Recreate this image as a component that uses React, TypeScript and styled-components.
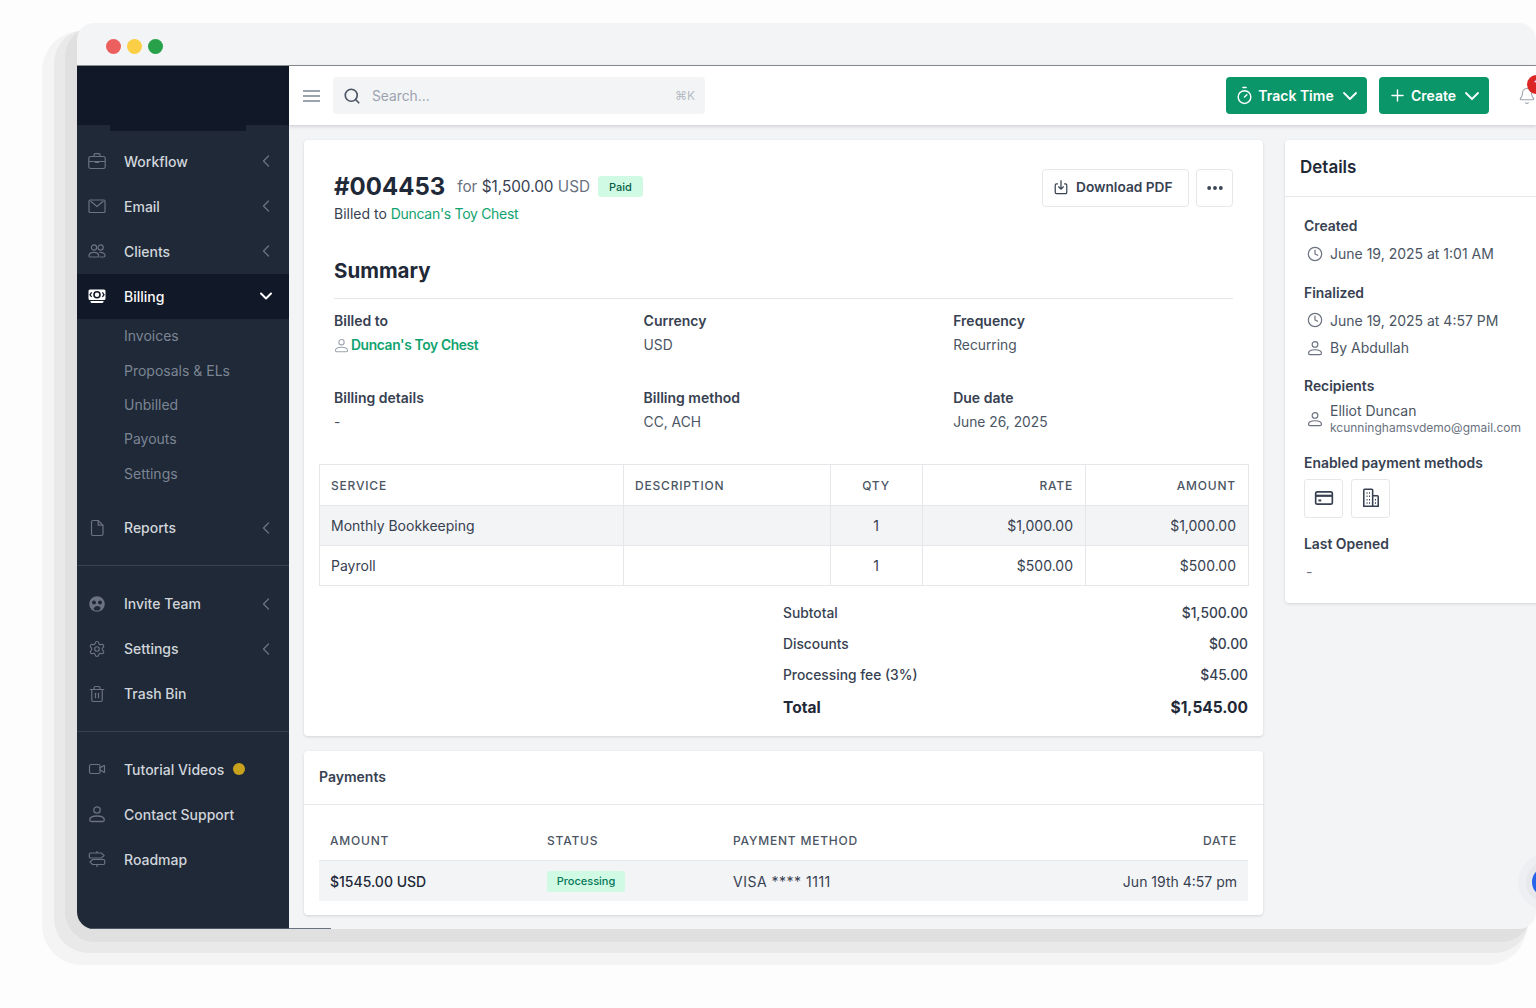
import React from 'react';
import styled, { createGlobalStyle } from 'styled-components';
import { ChevronDown, ChevronLeft, Clock, Ellipsis, Plus, Search, Settings, Timer, Trash2, Video, Bell } from 'lucide-react';

const GlobalStyle = createGlobalStyle`
  html, body {
    margin: 0;
    height: 100%;
    overflow: hidden;
    background: #fdfdfd;
    font-family: Inter, "Noto Sans", "Liberation Sans", sans-serif;
    color: #1f2937;
  }
  * { box-sizing: border-box; }
`;

const Page = styled.div`
  width: 1536px;
  height: 1008px;
  padding: 23px 0 0 77px;
  overflow: hidden;
`;

const Window = styled.div`
  position: relative;
  z-index: 0;
  width: 1459px;
  height: 906px;
  border-radius: 17px;
  display: flex;
  flex-direction: column;

  /* stepped drop shadow behind the window */
  &::before {
    content: '';
    position: absolute;
    z-index: -1;
    left: -12px;
    right: 5px;
    top: 4px;
    bottom: -13px;
    border-radius: 30px;
    background: #e0e0e0;
    box-shadow: -6.5px 6.5px 0 4.5px #e9e9e9, -13.5px 13.5px 0 9.5px #f4f4f4;
  }
`;

const WindowClip = styled.div`
  flex: 1;
  min-height: 0;
  border-radius: 17px;
  overflow: hidden;
  display: flex;
  flex-direction: column;
`;

const TitleBar = styled.div`
  flex: none;
  height: 43px;
  padding: 4px 0 0 29px;
  background: #f3f4f6;
  border-bottom: 1px solid #8b8d91;
  display: flex;
  align-items: center;
  gap: 6px;
`;

const Dot = styled.span<{ $color: string }>`
  width: 15px;
  height: 15px;
  border-radius: 50%;
  background: ${p => p.$color};
`;

const Body = styled.div`
  flex: 1;
  min-height: 0;
  display: flex;
`;

const Sidebar = styled.aside`
  flex: none;
  width: 212px;
  background: #1f2937;
  border-bottom: 1px solid #4b5563;
  color: #d1d5db;
`;

const LogoArea = styled.div`
  position: relative;
  height: 59px;
  background: #111827;

  &::after {
    content: '';
    position: absolute;
    left: 33px;
    top: 59px;
    width: 136px;
    height: 6px;
    background: #111827;
  }
`;

const Nav = styled.nav`
  padding-top: 13.5px;
`;

const NavRow = styled.div<{ $active?: boolean }>`
  height: 45px;
  padding: 0 13px 0 11px;
  display: flex;
  align-items: center;
  font-size: 14px;
  font-weight: 500;
  color: ${p => (p.$active ? '#f9fafb' : '#d1d5db')};
  background: ${p => (p.$active ? '#111827' : 'transparent')};

  > svg:first-child {
    flex: none;
    width: 18px;
    height: 18px;
    color: ${p => (p.$active ? '#ffffff' : '#6b7280')};
  }
`;

const NavLabel = styled.span`
  margin-left: 18px;
  flex: 1;
  display: flex;
  align-items: center;
  gap: 9px;
`;

const NewDot = styled.span`
  width: 12px;
  height: 12px;
  border-radius: 50%;
  background: #c9a21d;
`;

const SubNav = styled.div`
  padding-bottom: 15px;
`;

const SubRow = styled.div`
  height: 34.4px;
  padding-left: 47px;
  display: flex;
  align-items: center;
  font-size: 14px;
  color: #7c8594;
`;

const NavDivider = styled.div<{ $tight?: boolean }>`
  height: 1px;
  margin: 15px 0 ${p => (p.$tight ? '14.5px' : '15px')};
  background: #374151;
`;

const Main = styled.div`
  position: relative;
  flex: 1;
  min-width: 0;
  display: flex;
  flex-direction: column;
  background: #f3f4f6;
`;

const TopBar = styled.header`
  position: relative;
  flex: none;
  height: 59px;
  background: #ffffff;
  padding-left: 14px;
  display: flex;
  align-items: center;
  box-shadow: 0 1px 4px rgba(17, 24, 39, 0.2);
`;

const Burger = styled.span`
  width: 17px;
  height: 12px;
  margin-right: 13px;
  border-top: 2px solid #9ca3af;
  border-bottom: 2px solid #9ca3af;
  position: relative;

  &::after {
    content: '';
    position: absolute;
    left: 0;
    right: 0;
    top: 3px;
    height: 2px;
    background: #9ca3af;
  }
`;

const SearchBox = styled.div`
  width: 372px;
  height: 37px;
  padding: 0 10px;
  border-radius: 4px;
  background: #f3f4f6;
  display: flex;
  align-items: center;
  gap: 11px;
  font-size: 13.8px;
  color: #9ca3af;

  svg {
    width: 18px;
    height: 18px;
    color: #4b5563;
  }
`;

const SearchText = styled.span`
  flex: 1;
`;

const Kbd = styled.span`
  font-size: 12px;
  color: #b6bbc4;
`;

const TopActions = styled.div`
  margin-left: auto;
  display: flex;
  align-items: center;
  gap: 12px;
`;

const GreenButton = styled.button<{ $width: number }>`
  width: ${p => p.$width}px;
  height: 37px;
  padding: 0 0 0 2px;
  border: 0;
  border-radius: 4px;
  background: #0b9669;
  color: #ffffff;
  font: 600 14px Inter, sans-serif;
  display: flex;
  align-items: center;
  justify-content: center;
  gap: 4px;

  svg {
    width: 19px;
    height: 19px;
  }

  svg:last-child {
    width: 24px;
    height: 24px;
    margin-right: -2px;
  }
`;

const BellWrap = styled.span`
  position: relative;
  width: 18px;
  height: 20px;
  margin-left: 17px;
  color: #9ca3af;

  svg {
    width: 18px;
    height: 20px;
  }
`;

const Badge = styled.span`
  position: absolute;
  left: 9px;
  top: -11px;
  width: 19px;
  height: 19px;
  border-radius: 50%;
  background: #dc2626;
  color: #ffffff;
  font-size: 11px;
  font-weight: 700;
  text-align: center;
  line-height: 19px;
`;

const Content = styled.div`
  flex: 1;
  min-height: 0;
  padding: 15px 0 0 15px;
  display: flex;
  gap: 22px;
`;

const LeftColumn = styled.div`
  flex: none;
  width: 959px;
  display: flex;
  flex-direction: column;
  gap: 15px;
`;

const Card = styled.section`
  background: #ffffff;
  border-radius: 4px;
  box-shadow: 0 1px 3px rgba(17, 24, 39, 0.14);
`;

const InvoiceCard = styled(Card)`
  height: 596px;
  padding: 29px 15px 0;
`;

const Head = styled.div`
  padding: 0 15px;
  display: flex;
  justify-content: space-between;
`;

const TitleRow = styled.div`
  display: flex;
  align-items: center;
  height: 35px;
`;

const InvoiceNo = styled.h1`
  margin: 0 12px 0 0;
  font-size: 24px;
  font-weight: 700;
  color: #1f2937;
`;

const ForText = styled.span`
  font-size: 15.3px;
  color: #6b7280;

  b {
    font-weight: 400;
    color: #374151;
  }
`;

const StatusBadge = styled.span<{ $width: number }>`
  width: ${p => p.$width}px;
  height: 21px;
  border-radius: 3px;
  background: #d1fae5;
  color: #047857;
  font-size: 11px;
  font-weight: 500;
  display: inline-flex;
  align-items: center;
  justify-content: center;
`;

const PaidBadge = styled(StatusBadge)`
  margin-left: 8px;
  color: #065f46;
`;

const BilledLine = styled.div`
  margin-top: 1px;
  font-size: 14px;
  color: #374151;
`;

const GreenLink = styled.a`
  color: #10a36f;
  letter-spacing: -0.3px;
`;

const HeadButtons = styled.div`
  display: flex;
  gap: 7px;
`;

const OutlineButton = styled.button<{ $width: number }>`
  width: ${p => p.$width}px;
  height: 38px;
  padding: 0 0 2px 10px;
  border: 1px solid #e5e7eb;
  border-radius: 4px;
  background: #ffffff;
  color: #374151;
  font: 600 13.7px Inter, sans-serif;
  display: flex;
  align-items: center;
  gap: 7px;

  svg {
    width: 16px;
    height: 16px;
  }
`;

const MoreButton = styled(OutlineButton)`
  padding: 0;
  justify-content: center;

  svg {
    width: 20px;
    height: 20px;
    stroke-width: 2.6;
  }
`;

const SummaryTitle = styled.h2`
  margin: 35px 15px 0;
  padding-bottom: 14px;
  border-bottom: 1px solid #e5e7eb;
  font-size: 20.5px;
  line-height: 27px;
  font-weight: 700;
  color: #1f2937;
`;

const SummaryGrid = styled.div`
  margin: 12px 15px 0;
  display: grid;
  grid-template-columns: repeat(3, 309.6px);
  row-gap: 33px;
`;

const FieldLabel = styled.div`
  font-size: 14px;
  line-height: 20px;
  font-weight: 600;
  color: #374151;
`;

const FieldValue = styled.div`
  margin-top: 4px;
  font-size: 13.8px;
  line-height: 20px;
  color: #4b5563;
  display: flex;
  align-items: center;
  gap: 2px;

  svg {
    width: 15px;
    height: 15px;
    color: #9ca3af;
  }
`;

const StrongLink = styled(GreenLink)`
  font-weight: 600;
  letter-spacing: -0.35px;
`;

const ServiceTable = styled.table`
  width: 929px;
  margin-top: 32px;
  border-collapse: collapse;
  table-layout: fixed;
  font-size: 14px;
`;

const Th = styled.th<{ $align?: string; $width: number }>`
  width: ${p => p.$width}px;
  height: 41px;
  padding: 0 12px 0 11px;
  border: 1px solid #e5e7eb;
  font-size: 12px;
  font-weight: 500;
  letter-spacing: 0.8px;
  color: #4b5563;
  text-align: ${p => p.$align || 'left'};
`;

const Td = styled.td<{ $align?: string }>`
  height: 40px;
  padding: 0 12px 0 11px;
  border: 1px solid #e5e7eb;
  color: #374151;
  text-align: ${p => p.$align || 'left'};
`;

const ShadedRow = styled.tr<{ $shaded?: boolean }>`
  background: ${p => (p.$shaded ? '#f3f4f6' : '#ffffff')};
`;

const Totals = styled.div`
  margin: 11px 0 0 464px;
  display: flex;
  flex-direction: column;
`;

const TotalRow = styled.div<{ $big?: boolean }>`
  height: ${p => (p.$big ? '35px' : '31px')};
  display: flex;
  align-items: center;
  justify-content: space-between;
  font-size: ${p => (p.$big ? '15.5px' : '13.8px')};
  font-weight: ${p => (p.$big ? 700 : 500)};
  color: ${p => (p.$big ? '#1f2937' : '#374151')};
`;

const PaymentsCard = styled(Card)`
  height: 164px;
`;

const PaymentsHead = styled.div`
  height: 54px;
  padding: 0 0 2px 15px;
  border-bottom: 1px solid #e5e7eb;
  display: flex;
  align-items: center;
  font-size: 14px;
  font-weight: 600;
  color: #374151;
`;

const PaymentsTable = styled.div`
  margin: 0 15px;
`;

const PayRow = styled.div<{ $shaded?: boolean }>`
  height: ${p => (p.$shaded ? '40px' : '56px')};
  padding: ${p => (p.$shaded ? '0 11px' : '15px 11px 0')};
  display: grid;
  grid-template-columns: 217px 186px 1fr auto;
  align-items: center;
  background: ${p => (p.$shaded ? '#f3f4f6' : 'transparent')};
  border-bottom: ${p => (p.$shaded ? '0' : '1px solid #e5e7eb')};
  font-size: 14px;
  color: #374151;
`;

const PayHead = styled.span`
  font-size: 12px;
  font-weight: 500;
  letter-spacing: 0.8px;
  color: #4b5563;
`;

const PayAmount = styled.span`
  font-weight: 500;
  color: #1f2937;
`;

const CardNumber = styled.span`
  letter-spacing: 0.5px;
`;

const DetailsCard = styled(Card)`
  flex: none;
  width: 260px;
  height: 463px;
  align-self: flex-start;
`;

const DetailsTitle = styled.h3`
  height: 57px;
  margin: 0;
  padding: 0 0 3px 15px;
  border-bottom: 1px solid #e5e7eb;
  display: flex;
  align-items: center;
  font-size: 17px;
  font-weight: 600;
  color: #1f2937;
`;

const DetailsBody = styled.div`
  padding: 19px 0 0 19px;
  display: flex;
  flex-direction: column;
`;

const DetailsLabel = styled.div<{ $gap?: number }>`
  margin-top: ${p => p.$gap || 0}px;
  font-size: 13.9px;
  line-height: 20px;
  font-weight: 600;
  color: #374151;
`;

const DetailsLine = styled.div`
  height: 27.5px;
  padding-left: 3px;
  display: flex;
  align-items: center;
  gap: 7px;
  font-size: 14px;
  color: #4b5563;

  svg {
    flex: none;
    width: 16px;
    height: 16px;
    color: #6b7280;
  }
`;

const FirstLine = styled(DetailsLine)`
  margin-top: 4px;
`;

const RecipientLine = styled(DetailsLine)`
  height: 34px;
  margin-top: 6px;
`;

const RecipientText = styled.div`
  line-height: 17px;
`;

const Email = styled.div`
  font-size: 12px;
  color: #6b7280;
`;

const MethodRow = styled.div`
  margin-top: 6px;
  display: flex;
  gap: 8px;
`;

const MethodButton = styled.span`
  width: 39px;
  height: 39px;
  border: 1px solid #e5e7eb;
  border-radius: 3px;
  display: flex;
  align-items: center;
  justify-content: center;
  color: #374151;

  svg {
    width: 20px;
    height: 20px;
  }
`;

const Dash = styled.div`
  margin: 9px 0 0 2px;
  font-size: 14px;
  color: #6b7280;
`;

const ChatBubble = styled.span`
  position: absolute;
  left: 1243px;
  top: 801px;
  width: 30px;
  height: 30px;
  border-radius: 50%;
  background: #2563eb;
  box-shadow: 0 0 0 6px rgba(17, 24, 39, 0.03), 0 0 0 14px rgba(17, 24, 39, 0.02);
`;

const BottomLine = styled.span`
  position: absolute;
  left: 0;
  bottom: 0;
  width: 42px;
  height: 1px;
  background: #6b7280;
`;

const BriefcaseIcon = () => (
  <svg viewBox="0 0 18 18" fill="none" stroke="currentColor" strokeWidth="1.2">
    <rect x="0.8" y="4.5" width="16.4" height="12" rx="1.8" />
    <path d="M0.8 9.5h16.4M6 4.5V3a1.4 1.4 0 0 1 1.4-1.4h3.2A1.4 1.4 0 0 1 12 3v1.5M7.5 9.5v1h3v-1" />
  </svg>
);

const MailIcon = () => (
  <svg viewBox="0 0 18 18" fill="none" stroke="currentColor" strokeWidth="1.2">
    <rect x="1" y="3" width="16" height="12.5" rx="1" />
    <path d="M2.5 4l6.5 5.5L15.5 4" />
  </svg>
);

const UsersIcon = () => (
  <svg viewBox="0 0 18 18" fill="none" stroke="currentColor" strokeWidth="1.2">
    <circle cx="6" cy="5.5" r="2.6" />
    <circle cx="12.6" cy="5.5" r="2.6" />
    <path d="M1 14c0-2.2 2-3.6 4.8-3.6s4.9 1.4 4.9 3.6c0 .7-.5 1-1 1H2c-.6 0-1-.4-1-1z" />
    <path d="M11.5 10.4c3-.3 5.5 1 5.5 3.4 0 .8-.5 1.2-1.2 1.2h-4.2" />
  </svg>
);

const BanknoteIcon = () => (
  <svg viewBox="0 0 18 18">
    <path fill="#fff" d="M2 2.5h14A1.5 1.5 0 0 1 17.5 4v7.5A1.5 1.5 0 0 1 16 13H2A1.5 1.5 0 0 1 .5 11.5V4A1.5 1.5 0 0 1 2 2.5z" />
    <path fill="#fff" d="M2.5 14h13v.5a1.6 1.6 0 0 1-1.6 1.6H4.1a1.6 1.6 0 0 1-1.6-1.6z" />
    <circle cx="9" cy="7.7" r="3" fill="#fff" stroke="#111827" strokeWidth="1.6" />
    <path fill="none" stroke="#111827" strokeWidth="1.3" d="M3.6 5.4L2 7.7l1.6 2.3M14.4 5.4L16 7.7l-1.6 2.3" />
  </svg>
);

const DocIcon = () => (
  <svg viewBox="0 0 18 18" fill="none" stroke="currentColor" strokeWidth="1.2">
    <path d="M3.5 3a1.5 1.5 0 0 1 1.5-1.5h5.2L15 6.2V15a1.5 1.5 0 0 1-1.5 1.5H5A1.5 1.5 0 0 1 3.5 15z" />
    <path d="M10.2 1.5v4.7H15" />
  </svg>
);

const FaceIcon = () => (
  <svg viewBox="0 0 18 18">
    <circle cx="9" cy="9" r="7.8" fill="currentColor" />
    <circle cx="6" cy="7.6" r="2" fill="#1f2937" />
    <circle cx="12" cy="7.6" r="2" fill="#1f2937" />
    <path d="M5.5 14c.8-2 2-3 3.8-3s2.8.8 3.4 2.2L11 15.5H7z" fill="#1f2937" />
  </svg>
);

const SignIcon = () => (
  <svg viewBox="0 0 18 18" fill="none" stroke="currentColor" strokeWidth="1.2">
    <path d="M9 1v2M9 15v2M2.5 3h11L16 5.5 13.5 8h-11A1.2 1.2 0 0 1 1.3 6.8V4.2A1.2 1.2 0 0 1 2.5 3z" />
    <path d="M15.5 9.5h-11L2 12l2.5 2.5h11a1.2 1.2 0 0 0 1.2-1.2v-2.6a1.2 1.2 0 0 0-1.2-1.2z" />
  </svg>
);

const PersonIcon = () => (
  <svg viewBox="0 0 18 18" fill="none" stroke="currentColor" strokeWidth="1.3">
    <circle cx="9" cy="5" r="3.2" />
    <path d="M1.7 15c0-2.5 3-4 7.3-4s7.3 1.5 7.3 4c0 1-.8 1.5-1.6 1.5H3.3c-.8 0-1.6-.5-1.6-1.5z" />
  </svg>
);

const DownloadIcon = () => (
  <svg viewBox="0 0 18 18" fill="none" stroke="currentColor" strokeWidth="1.4">
    <path d="M5.5 5.5H4A1.5 1.5 0 0 0 2.5 7v8A1.5 1.5 0 0 0 4 16.5h10a1.5 1.5 0 0 0 1.5-1.5V7A1.5 1.5 0 0 0 14 5.5h-1.5" />
    <path d="M9 1.5V11M6 8.5l3 3 3-3" />
  </svg>
);

const CardIcon = () => (
  <svg viewBox="0 0 18 18" fill="none" stroke="currentColor" strokeWidth="1.5">
    <rect x="1.5" y="3.5" width="15" height="11" rx="1.5" />
    <path d="M1.5 7h15" strokeWidth="2" />
    <path d="M4 11.2h2.5" strokeWidth="1.8" />
  </svg>
);

const BuildingIcon = () => (
  <svg viewBox="0 0 18 18" fill="none" stroke="currentColor" strokeWidth="1.4">
    <path d="M2.5 16.5V2a.8.8 0 0 1 .8-.8h6.4a.8.8 0 0 1 .8.8v14.5zM10.500 7h4.200a.8.8 0 0 1 .8.8v8.700h-5z" />
    <path d="M5 4.500h.9M7.200 4.500h.9M5 7.500h.9M7.200 7.500h.9M5 10.500h.9M7.200 10.500h.9M5 13.500h.9M7.200 13.500h.9M12.500 10.500h1M12.500 13.500h1" />
  </svg>
);

type NavEntry = { label: string; icon: React.ReactNode; chevron?: boolean; dot?: boolean };

const renderRow = (item: NavEntry) => (
  <NavRow key={item.label}>
    {item.icon}
    <NavLabel>
      {item.label}
      {item.dot && <NewDot />}
    </NavLabel>
    {item.chevron && <ChevronLeft size={20} strokeWidth={1.6} color="#6b7280" />}
  </NavRow>
);

const workNav: NavEntry[] = [
  { label: 'Workflow', icon: <BriefcaseIcon />, chevron: true },
  { label: 'Email', icon: <MailIcon />, chevron: true },
  { label: 'Clients', icon: <UsersIcon />, chevron: true },
];

const teamNav: NavEntry[] = [
  { label: 'Invite Team', icon: <FaceIcon />, chevron: true },
  { label: 'Settings', icon: <Settings strokeWidth={1.6} />, chevron: true },
  { label: 'Trash Bin', icon: <Trash2 strokeWidth={1.6} /> },
];

const helpNav: NavEntry[] = [
  { label: 'Tutorial Videos', icon: <Video strokeWidth={1.6} />, dot: true },
  { label: 'Contact Support', icon: <PersonIcon /> },
  { label: 'Roadmap', icon: <SignIcon /> },
];

const billingItems = ['Invoices', 'Proposals & ELs', 'Unbilled', 'Payouts', 'Settings'];

const summary = [
  { label: 'Currency', value: 'USD' },
  { label: 'Frequency', value: 'Recurring' },
  { label: 'Billing details', value: '-' },
  { label: 'Billing method', value: 'CC, ACH' },
  { label: 'Due date', value: 'June 26, 2025' },
];

const services = [
  { name: 'Monthly Bookkeeping', qty: 1, rate: '$1,000.00', amount: '$1,000.00' },
  { name: 'Payroll', qty: 1, rate: '$500.00', amount: '$500.00' },
];

const totals = [
  { label: 'Subtotal', value: '$1,500.00' },
  { label: 'Discounts', value: '$0.00' },
  { label: 'Processing fee (3%)', value: '$45.00' },
];

export default function App() {
  return (
    <Page>
      <GlobalStyle />
      <Window>
        <WindowClip>
          <TitleBar>
            <Dot $color="#ec5f5f" />
            <Dot $color="#fbcf45" />
            <Dot $color="#27a24a" />
          </TitleBar>
          <Body>
            <Sidebar>
              <LogoArea />
              <Nav>
                {workNav.map(renderRow)}
                <NavRow $active>
                  <BanknoteIcon />
                  <NavLabel>Billing</NavLabel>
                  <ChevronDown size={20} strokeWidth={2.4} color="#ffffff" />
                </NavRow>
                <SubNav>
                  {billingItems.map(item => (
                    <SubRow key={item}>{item}</SubRow>
                  ))}
                </SubNav>
                {renderRow({ label: 'Reports', icon: <DocIcon />, chevron: true })}
                <NavDivider />
                {teamNav.map(renderRow)}
                <NavDivider $tight />
                {helpNav.map(renderRow)}
              </Nav>
            </Sidebar>
            <Main>
              <TopBar>
                <Burger />
                <SearchBox>
                  <Search strokeWidth={2.2} />
                  <SearchText>Search...</SearchText>
                  <Kbd>⌘K</Kbd>
                </SearchBox>
                <TopActions>
                  <GreenButton $width={141}>
                    <Timer strokeWidth={1.8} />
                    Track Time
                    <ChevronDown strokeWidth={1.8} />
                  </GreenButton>
                  <GreenButton $width={110}>
                    <Plus strokeWidth={1.8} />
                    Create
                    <ChevronDown strokeWidth={1.8} />
                  </GreenButton>
                  <BellWrap>
                    <Bell strokeWidth={1.5} />
                    <Badge>1</Badge>
                  </BellWrap>
                </TopActions>
              </TopBar>
              <Content>
                <LeftColumn>
                  <InvoiceCard>
                    <Head>
                      <div>
                        <TitleRow>
                          <InvoiceNo>#004453</InvoiceNo>
                          <ForText>
                            for <b>$1,500.00</b> USD
                          </ForText>
                          <PaidBadge $width={45}>Paid</PaidBadge>
                        </TitleRow>
                        <BilledLine>
                          Billed to <GreenLink>Duncan's Toy Chest</GreenLink>
                        </BilledLine>
                      </div>
                      <HeadButtons>
                        <OutlineButton $width={147}>
                          <DownloadIcon />
                          Download PDF
                        </OutlineButton>
                        <MoreButton $width={37}>
                          <Ellipsis />
                        </MoreButton>
                      </HeadButtons>
                    </Head>
                    <SummaryTitle>Summary</SummaryTitle>
                    <SummaryGrid>
                      <div>
                        <FieldLabel>Billed to</FieldLabel>
                        <FieldValue>
                          <PersonIcon />
                          <StrongLink>Duncan's Toy Chest</StrongLink>
                        </FieldValue>
                      </div>
                      {summary.map(field => (
                        <div key={field.label}>
                          <FieldLabel>{field.label}</FieldLabel>
                          <FieldValue>{field.value}</FieldValue>
                        </div>
                      ))}
                    </SummaryGrid>
                    <ServiceTable>
                      <thead>
                        <tr>
                          <Th $width={304}>SERVICE</Th>
                          <Th $width={207}>DESCRIPTION</Th>
                          <Th $width={92} $align="center">QTY</Th>
                          <Th $width={163} $align="right">RATE</Th>
                          <Th $width={163} $align="right">AMOUNT</Th>
                        </tr>
                      </thead>
                      <tbody>
                        {services.map((row, i) => (
                          <ShadedRow key={row.name} $shaded={i === 0}>
                            <Td>{row.name}</Td>
                            <Td />
                            <Td $align="center">{row.qty}</Td>
                            <Td $align="right">{row.rate}</Td>
                            <Td $align="right">{row.amount}</Td>
                          </ShadedRow>
                        ))}
                      </tbody>
                    </ServiceTable>
                    <Totals>
                      {totals.map(row => (
                        <TotalRow key={row.label}>
                          <span>{row.label}</span>
                          <span>{row.value}</span>
                        </TotalRow>
                      ))}
                      <TotalRow $big>
                        <span>Total</span>
                        <span>$1,545.00</span>
                      </TotalRow>
                    </Totals>
                  </InvoiceCard>
                  <PaymentsCard>
                    <PaymentsHead>Payments</PaymentsHead>
                    <PaymentsTable>
                      <PayRow>
                        <PayHead>AMOUNT</PayHead>
                        <PayHead>STATUS</PayHead>
                        <PayHead>PAYMENT METHOD</PayHead>
                        <PayHead>DATE</PayHead>
                      </PayRow>
                      <PayRow $shaded>
                        <PayAmount>$1545.00 USD</PayAmount>
                        <span>
                          <StatusBadge $width={78}>Processing</StatusBadge>
                        </span>
                        <CardNumber>VISA **** 1111</CardNumber>
                        <span>Jun 19th 4:57 pm</span>
                      </PayRow>
                    </PaymentsTable>
                  </PaymentsCard>
                </LeftColumn>
                <DetailsCard>
                  <DetailsTitle>Details</DetailsTitle>
                  <DetailsBody>
                    <DetailsLabel>Created</DetailsLabel>
                    <FirstLine>
                      <Clock strokeWidth={1.8} />
                      June 19, 2025 at 1:01 AM
                    </FirstLine>
                    <DetailsLabel $gap={15}>Finalized</DetailsLabel>
                    <FirstLine>
                      <Clock strokeWidth={1.8} />
                      June 19, 2025 at 4:57 PM
                    </FirstLine>
                    <DetailsLine>
                      <PersonIcon />
                      By Abdullah
                    </DetailsLine>
                    <DetailsLabel $gap={14}>Recipients</DetailsLabel>
                    <RecipientLine>
                      <PersonIcon />
                      <RecipientText>
                        Elliot Duncan
                        <Email>kcunninghamsvdemo@gmail.com</Email>
                      </RecipientText>
                    </RecipientLine>
                    <DetailsLabel $gap={17}>Enabled payment methods</DetailsLabel>
                    <MethodRow>
                      <MethodButton>
                        <CardIcon />
                      </MethodButton>
                      <MethodButton>
                        <BuildingIcon />
                      </MethodButton>
                    </MethodRow>
                    <DetailsLabel $gap={16}>Last Opened</DetailsLabel>
                    <Dash>-</Dash>
                  </DetailsBody>
                </DetailsCard>
              </Content>
              <ChatBubble />
              <BottomLine />
            </Main>
          </Body>
        </WindowClip>
      </Window>
    </Page>
  );
}
